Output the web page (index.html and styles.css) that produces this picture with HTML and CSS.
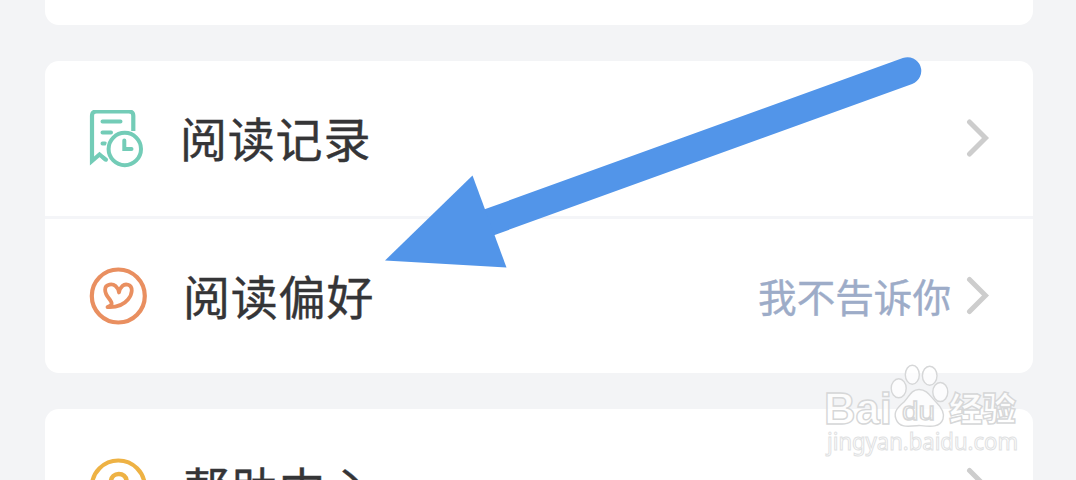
FILE: index.html
```html
<!DOCTYPE html>
<html lang="zh-CN">
<head>
<meta charset="utf-8">
<title>阅读偏好</title>
<link rel="stylesheet" href="styles.css">
</head>
<body>
<main class="page">
  <section class="card card-top"></section>
  <section class="card">
    <div class="row row-first">
      <svg class="icon" viewBox="0 0 60 60" fill="none" stroke="#73ccb7" stroke-width="4" stroke-linecap="round">
        <path d="M45.300 21V6Q45.300 1.500 40.800 1.500H8.500Q4 1.500 4 6V51L11.500 44.500L18 50" stroke-linecap="butt" stroke-width="4.200"/>
        <path d="M14.500 11.400H32.500M14.500 22.400H23M14.500 33.400H17"/>
        <circle cx="36.800" cy="39" r="19.200" fill="#fff" stroke="none"/>
        <path d="M15.500 47.700L18 49.700"/>
        <circle cx="36.800" cy="39" r="16.200"/>
        <path d="M36.300 30.500V39H43.500"/>
      </svg>
      <span class="label label-first">阅读记录</span>
      <svg class="chevron" viewBox="0 0 24 40"><path d="M3.500 3L19.500 19L3.500 35"/></svg>
    </div>
    <div class="row row-second">
      <svg class="icon" viewBox="0 0 60 60" fill="none" stroke="#e98f60" stroke-width="4.200" stroke-linejoin="round">
        <circle cx="30.300" cy="30" r="26.500"/>
        <path d="M19.500 41C24.500 39 25 37.500 21 32.500C16 26.500 15.500 19.800 21.500 18.600C26 17.700 30 20.500 31 26.500C32 20.500 36 17.500 40 18.800C45.500 20.500 44.500 28 40 33.500C35.500 39 29 41.500 19.500 41Z" stroke-width="3.800"/>
      </svg>
      <span class="label">阅读偏好</span>
      <span class="value">我不告诉你</span>
      <svg class="chevron" viewBox="0 0 24 40"><path d="M3.500 3.500L19.500 19.500L3.500 35.500"/></svg>
    </div>
  </section>
  <section class="card">
    <div class="row row-last">
      <svg class="icon" viewBox="0 0 60 60" fill="none" stroke="#eeb244" stroke-width="4.200">
        <circle cx="30.300" cy="30" r="26.500"/>
        <path d="M23 24.500C23 14.500 38.500 14.500 38.500 24C38.500 30 30.500 29 30.500 36" stroke-linecap="round" stroke-width="4.600"/>
      </svg>
      <span class="label label-last">帮助中心</span>
      <svg class="chevron" viewBox="0 0 24 40"><path d="M3.500 3.500L19.500 19.500L3.500 35.500"/></svg>
    </div>
  </section>
</main>
<svg class="overlay" viewBox="0 0 1076 480">
  <path d="M490 222L907.500 71" stroke="#5295e9" stroke-width="27.500" stroke-linecap="round"/>
  <path d="M385 260.500L472.500 175.500L506.500 267.500Z" fill="#5295e9"/>
  <g class="mark">
    <text class="mark-brand" x="824" y="424" textLength="68" lengthAdjust="spacingAndGlyphs">Bai</text>
    <ellipse cx="898.700" cy="388.300" rx="7.500" ry="9.500"/>
    <ellipse cx="912.300" cy="374.700" rx="7" ry="9.500"/>
    <ellipse cx="929.700" cy="375.700" rx="7.300" ry="9.500"/>
    <ellipse cx="940.300" cy="392" rx="7.500" ry="9.500"/>
    <path d="M919 389.500C927 389.500 930 396 936 402C942 408 945 413 943 419C940 428 930 426.500 919 425.500C908 426.500 899 428 896 419C893 412 898 407 904 402C909 397 911 389.500 919 389.500Z"/>
    <text class="mark-du" x="902" y="420" textLength="33" lengthAdjust="spacingAndGlyphs">du</text>
    <text class="mark-cn" x="949" y="421" textLength="67" lengthAdjust="spacingAndGlyphs">经验</text>
    <text class="mark-url" x="827" y="450" textLength="191" lengthAdjust="spacingAndGlyphs">jingyan.baidu.com</text>
  </g>
</svg>
</body>
</html>
```
FILE: styles.css
```css
* { box-sizing: border-box; }
body {
  margin: 0;
  height: 480px;
  overflow: hidden;
  background: #f3f4f6;
  font-family: "Noto Sans CJK SC", sans-serif;
}
.page {
  display: flex;
  flex-direction: column;
  gap: 36px;
  height: 480px;
  padding: 0 43px 0 45px;
  overflow: hidden;
}
.card {
  flex: none;
  border-radius: 14px;
  background: #fff;
}
.card-top {
  height: 25px;
  border-radius: 0 0 14px 14px;
}
.row {
  display: flex;
  align-items: center;
  height: 156px;
  padding: 0 43px;
}
.row-first { border-bottom: 3px solid #f4f5f8; height: 158px; }
.row-first .icon { margin-top: 3px; }
.row-second { height: 154px; }
.icon { flex: none; width: 60px; height: 60px; }
.label {
  margin: -3px auto 0 35px;
  color: #353537;
  font-size: 47px;
  line-height: 60px;
  letter-spacing: .8px;
  white-space: nowrap;
  -webkit-text-stroke: .4px #353537;
}
.label-first { margin: -3px auto 0 32px; }
.label-last { margin-top: 0; }
.value {
  margin: -3px 15px 0 0;
  color: #9dacc8;
  font-size: 38.600px;
  line-height: 50px;
  -webkit-text-stroke: .4px #9dacc8;
}
.chevron { flex: none; width: 24px; height: 40px; }
.chevron path {
  fill: none;
  stroke: #cdcdcd;
  stroke-width: 5;
  stroke-linecap: round;
}
.overlay {
  position: absolute;
  top: 0;
  left: 0;
  width: 1076px;
  height: 480px;
}
.mark {
  fill: rgba(255, 255, 255, .75);
  stroke: #d6d7d8;
  stroke-width: 1.400px;
}
.mark text { font-family: "Liberation Sans", sans-serif; }
.mark .mark-brand { font-size: 44px; font-weight: 700; }
.mark .mark-du { font-size: 26px; font-weight: 400; }
.mark .mark-cn { font-family: "Noto Sans CJK SC", sans-serif; font-size: 33px; font-weight: 900; }
.mark .mark-url { font-family: "Noto Sans", sans-serif; font-size: 23px; stroke-width: 1px; stroke: #e0e1e2; }
```
